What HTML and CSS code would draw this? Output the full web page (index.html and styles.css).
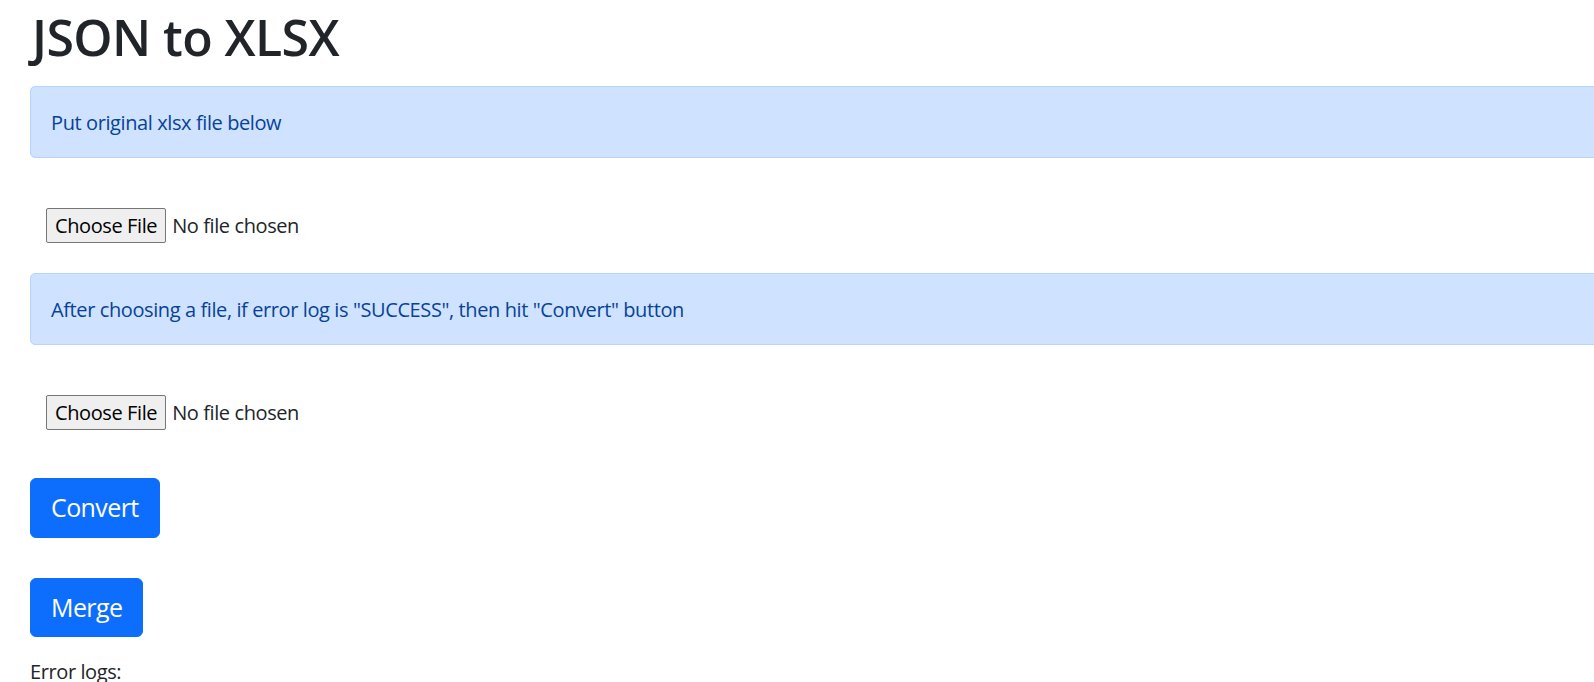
FILE: index.html
```html
<!DOCTYPE html>
<html lang="en">
<head>
<meta charset="utf-8">
<title>JSON to XLSX</title>
<link rel="stylesheet" href="styles.css">
</head>
<body>
<div class="page">
  <h1 class="title">JSON to XLSX</h1>
  <div class="alert">Put original xlsx file below</div>
  <div class="file-row"><input type="file" class="file-input"></div>
  <div class="alert">After choosing a file, if error log is "SUCCESS", then hit "Convert" button</div>
  <div class="file-row"><input type="file" class="file-input"></div>
  <div class="actions">
    <button class="btn" type="button">Convert</button>
    <button class="btn" type="button">Merge</button>
  </div>
  <p class="logs-label">Error logs:</p>
</div>
</body>
</html>
```

FILE: styles.css
```css
html, body {
  margin: 0;
  padding: 0;
  overflow: hidden;
  background: #fff;
}

body {
  font-family: "Open Sans", "Noto Sans", sans-serif;
  font-size: 20px;
  line-height: 1.5;
  letter-spacing: -0.4px;
  color: #212529;
}

.page {
  width: 1640px;
  padding: 7px 0 0 30px;
  box-sizing: border-box;
}

.title {
  margin: 0 0 19px 2px;
  font-size: 50px;
  font-weight: 600;
  line-height: 60px;
  letter-spacing: -0.6px;
  color: #212529;
}

.alert {
  padding: 21px 20px 19px;
  margin-bottom: 20px;
  border: 1px solid #b6d4fe;
  border-radius: 5px;
  background: #cfe2ff;
  color: #084298;
  line-height: 30px;
}

.file-row {
  padding: 30px 16px 30px 16px;
  height: 35px;
}

.file-input {
  font-family: inherit;
  font-size: 20px;
  line-height: 30px;
  letter-spacing: -0.4px;
  color: #212529;
}

.file-input::file-selector-button {
  font-family: inherit;
  font-size: 20px;
  line-height: 31px;
  letter-spacing: -0.4px;
  padding: 1px 8px;
  margin-right: 6px;
  border: 1px solid #767676;
  border-radius: 2px;
  background: #efefef;
  color: #000;
}

.actions {
  display: flex;
  flex-direction: column;
  align-items: flex-start;
  gap: 40px;
  padding-top: 18px;
}

.btn {
  font-family: inherit;
  font-size: 25px;
  line-height: 37.5px;
  letter-spacing: -0.6px;
  padding: 10px 20px;
  border: 1px solid #0d6efd;
  border-radius: 6px;
  background: #0d6efd;
  color: #fff;
  cursor: pointer;
}

.logs-label {
  margin: 20px 0 0;
  line-height: 30px;
}
```
